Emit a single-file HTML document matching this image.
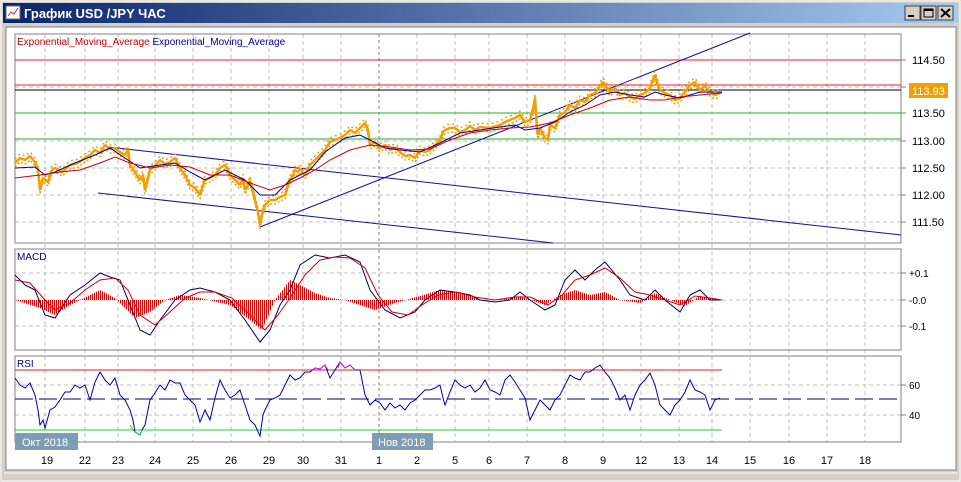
<!DOCTYPE html>
<html><head><meta charset="utf-8"><style>
html,body{margin:0;padding:0;width:961px;height:482px;overflow:hidden;background:#d4d0c8;font-family:"Liberation Sans",sans-serif}
</style></head><body>
<svg width="961" height="482" xmlns="http://www.w3.org/2000/svg" style="position:absolute;left:0;top:0" font-family="Liberation Sans, DejaVu Sans, sans-serif">
<defs>
<linearGradient id="tb" x1="0" x2="1"><stop offset="0" stop-color="#0a246a"/><stop offset="1" stop-color="#a6caf0"/></linearGradient>
<pattern id="hb" width="2" height="4" patternUnits="userSpaceOnUse"><rect width="1" height="4" fill="#e00000"/></pattern>
<polyline id="pr" fill="none" stroke="#f0a000" stroke-linejoin="bevel" points="15,163 20,158 25,160 30,156 35,162 38,170 40,190 43,178 48,182 52,170 55,168 62,172 70,165 78,163 85,158 90,155 95,150 100,153 105,145 110,149 115,148 120,152 125,155 128,150 130,165 135,172 140,180 143,175 145,190 148,178 150,170 155,166 160,160 165,164 170,162 175,158 180,168 185,175 190,185 195,188 200,195 203,185 205,180 210,178 215,175 220,168 225,165 228,170 230,175 235,180 240,185 243,178 245,190 248,185 250,180 253,192 255,200 258,212 260,225 263,210 265,205 270,200 275,200 280,197 285,195 288,185 290,180 293,175 295,170 298,172 300,168 303,173 305,175 310,165 315,160 320,155 325,150 330,142 335,140 340,138 345,135 348,132 350,130 355,133 360,128 363,125 365,123 368,130 370,145 375,142 380,148 385,145 390,150 395,148 400,152 405,156 410,155 415,158 420,150 425,152 430,150 435,145 440,140 443,132 445,130 450,128 455,128 460,132 465,130 470,126 475,130 480,127 490,128 500,125 505,122 510,120 515,118 520,115 525,122 530,120 533,110 535,98 537,130 538,135 540,128 545,138 548,140 550,125 555,128 560,115 565,112 570,105 575,108 580,100 585,102 590,95 595,93 600,86 603,82 605,85 610,92 615,88 620,95 625,93 630,97 635,99 640,95 645,93 650,88 653,80 655,75 657,82 660,90 665,93 670,95 675,100 680,98 685,92 690,85 695,82 700,90 705,86 710,92 715,95 720,93"/>
</defs>
<rect x="0" y="0" width="961" height="482" fill="#d4d0c8"/>
<rect x="1" y="1" width="959" height="480" fill="none" stroke="#ffffff"/>
<rect x="3" y="3" width="955" height="20" fill="url(#tb)"/>
<rect x="6" y="6" width="14" height="13" fill="#fff" stroke="#666"/>
<path d="M8 16 L11 12 L14 14 L18 8" stroke="#c03030" fill="none"/>
<text x="24" y="18" fill="#fff" font-size="13" font-weight="bold">График USD /JPY  ЧАС</text>
<g stroke="#404040" fill="#d4d0c8"><rect x="905" y="6" width="15" height="14"/><rect x="921" y="6" width="15" height="14"/><rect x="938" y="6" width="15" height="14"/></g>
<rect x="908" y="15" width="6" height="2" fill="#000"/>
<rect x="924" y="9" width="9" height="8" fill="none" stroke="#000"/><rect x="924" y="9" width="9" height="2" fill="#000"/>
<path d="M941 9 L950 17 M950 9 L941 17" stroke="#000" stroke-width="2"/>
<rect x="6" y="27" width="950" height="443" fill="#fff" stroke="#808080"/>
<line x1="4" y1="473" x2="957" y2="473" stroke="#fff"/>

<g stroke="#c0c0c0" stroke-dasharray="4,3">
<path d="M45 34V442M85 34V442M118 34V442M155 34V442M193 34V442M231 34V442M269 34V442M303 34V442M341 34V442M417 34V442M455 34V442M489 34V442M527 34V442M565 34V442M603 34V442M641 34V442M679 34V442M712 34V442M750 34V442M789 34V442M827 34V442M865 34V442"/>
<path d="M15 60H901M15 87H901M15 113H901M15 141H901M15 168H901M15 195H901M15 222H901"/>
<path d="M15 273H901M15 300H901M15 326H901M15 385H901M15 415H901"/>
</g>
<path d="M379 34V442" stroke="#808080" stroke-dasharray="3,3"/>

<g fill="none" stroke="#808080"><rect x="15" y="34" width="886" height="209"/><rect x="15" y="249" width="886" height="101"/><rect x="15" y="356" width="886" height="86"/></g>

<text x="17" y="45" font-size="10" fill="#c00000">Exponential_Moving_Average <tspan fill="#000090">Exponential_Moving_Average</tspan></text>
<line x1="15" y1="60" x2="901" y2="60" stroke="#e02020"/>
<line x1="15" y1="85" x2="901" y2="85" stroke="#e02020"/>
<line x1="15" y1="90" x2="901" y2="90" stroke="#000"/>
<line x1="15" y1="113" x2="901" y2="113" stroke="#20b020"/>
<line x1="15" y1="139" x2="901" y2="139" stroke="#20b020"/>
<g stroke="#10109a" fill="none">
<line x1="108" y1="147" x2="901" y2="235"/>
<line x1="98" y1="193" x2="553" y2="243"/>
<line x1="260" y1="227" x2="750" y2="33"/>
</g>
<use href="#pr" transform="translate(0,4)" stroke-width="1.5" stroke-dasharray="2,2"/>
<use href="#pr" transform="translate(0,-4)" stroke-width="1.5" stroke-dasharray="2,3"/>
<use href="#pr" stroke-width="2.5"/>
<polyline fill="none" stroke="#0000a0" stroke-width="1" points="15,168 35,167 45,175 55,172 75,163 95,155 110,148 125,158 140,168 160,165 175,163 190,172 205,180 225,170 245,180 260,195 275,195 290,180 310,170 325,152 345,138 360,135 370,140 385,148 400,150 420,152 440,143 460,133 480,130 500,127 515,125 525,130 540,128 555,122 570,112 585,105 600,95 615,92 630,95 645,97 655,92 665,95 680,98 690,95 700,92 712,92 722,92"/>
<polyline fill="none" stroke="#d00000" stroke-width="1" points="15,178 40,175 60,172 80,170 100,163 115,157 130,163 150,168 170,165 190,167 210,175 230,175 250,183 270,190 285,185 300,178 315,170 330,160 350,150 370,145 390,147 410,150 430,149 450,140 470,133 490,130 510,128 530,127 550,123 570,115 590,108 610,100 630,97 650,100 665,100 680,97 700,95 722,93"/>
<g font-size="11" fill="#000">
<text x="912" y="64">114.50</text><text x="912" y="117">113.50</text><text x="912" y="145">113.00</text><text x="912" y="172">112.50</text><text x="912" y="199">112.00</text><text x="912" y="226">111.50</text>
</g>
<rect x="909" y="83" width="39" height="15" fill="#f0a000"/>
<text x="912" y="95" font-size="11" fill="#fff">113.93</text>
<g stroke="#808080"><path d="M901 60h5M901 87h5M901 113h5M901 141h5M901 168h5M901 195h5M901 222h5M901 273h5M901 300h5M901 326h5M901 385h5M901 415h5"/></g>

<text x="17" y="260" font-size="10" fill="#000080">MACD</text>
<polygon fill="url(#hb)" points="15,300 40,308 55,315 70,305 90,295 100,290 115,298 135,318 150,312 165,300 180,295 200,298 230,305 250,320 262,330 275,300 290,280 300,285 315,293 330,298 345,300 360,305 375,310 395,303 420,296 440,290 460,292 480,300 500,300 520,296 545,305 560,295 575,290 590,295 605,292 620,300 640,303 655,293 670,300 685,306 700,296 720,300"/>
<polyline fill="none" stroke="#000060" points="15,275 25,285 35,290 45,315 55,318 70,295 85,285 100,273 110,277 120,280 130,305 140,330 150,335 160,320 175,300 190,290 200,288 215,292 230,300 245,320 260,342 270,330 280,305 290,290 300,265 315,255 330,258 345,255 360,262 370,290 385,310 400,318 415,312 425,300 440,290 455,292 470,295 480,300 495,302 510,300 520,292 530,300 545,310 555,305 565,280 575,270 585,280 595,270 605,262 620,280 630,295 645,300 655,290 665,300 680,312 690,295 700,290 710,300 720,300"/>
<polyline fill="none" stroke="#d00000" points="15,280 30,283 45,300 55,310 70,303 85,290 100,280 115,278 128,290 140,315 155,325 170,312 185,298 200,292 215,292 232,298 250,315 265,330 278,315 290,298 305,275 320,260 335,257 350,258 365,268 378,295 392,312 408,315 422,305 438,295 455,292 475,297 495,300 515,297 530,297 548,305 562,295 575,280 590,275 605,268 620,278 635,292 650,295 665,300 680,305 695,296 710,298 722,300"/>
<g font-size="10" fill="#000"><text x="909" y="277">+0.1</text><text x="909" y="304">-0.0</text><text x="909" y="330">-0.1</text></g>

<text x="17" y="367" font-size="10" fill="#000080">RSI</text>
<line x1="15" y1="370" x2="722" y2="370" stroke="#e02020"/>
<line x1="15" y1="430" x2="722" y2="430" stroke="#20d020"/>
<line x1="15" y1="399" x2="901" y2="399" stroke="#000080" stroke-dasharray="18,6"/>
<polyline fill="none" stroke="#0000b0" points="15,378 20,385 25,388 30,383 35,395 38,410 40,425 43,420 45,428 50,410 55,407 60,400 65,392 70,392 75,385 80,388 85,385 90,400 95,382 100,372 105,380 110,385 115,378 120,395 125,400 130,410 133,420 135,432 140,435 142,430 145,425 150,400 155,393 160,385 165,390 170,380 175,383 180,383 185,395 190,400 195,405 200,422 205,410 210,420 215,398 220,380 225,390 230,398 235,395 240,390 245,405 250,420 255,425 260,436 263,415 265,410 270,400 275,398 280,395 285,385 290,375 295,380 300,378 305,372 310,372 315,368 320,369 325,365 330,378 335,370 340,362 345,368 350,365 355,370 360,370 365,395 370,405 375,400 380,403 385,410 390,403 395,408 400,405 405,410 410,403 415,400 420,395 425,390 430,390 435,388 440,385 443,398 445,405 450,392 455,380 460,385 465,388 470,385 475,392 480,388 485,380 490,390 495,392 500,395 505,380 510,375 515,382 520,390 525,398 530,420 535,410 540,400 545,405 550,410 555,400 560,395 565,385 570,375 575,378 580,380 585,372 590,372 595,368 600,365 605,372 610,378 615,388 620,400 625,395 630,410 635,395 640,385 645,380 650,373 655,385 660,405 665,410 670,415 675,405 680,400 685,392 690,380 695,390 700,392 705,395 710,410 715,400 720,398"/>
<polyline fill="none" stroke="#20d020" points="130,425 133,430 135,432 140,435 142,430"/>
<polyline fill="none" stroke="#e020e0" points="312,370 315,368 320,369 325,365 328,370"/>
<polyline fill="none" stroke="#e020e0" points="338,368 340,362 345,368 350,365 355,370"/>
<g font-size="10" fill="#000"><text x="909" y="389">60</text><text x="909" y="419">40</text></g>

<rect x="15" y="433" width="63" height="17" fill="#7f9cb5"/>
<text x="22" y="446" font-size="11" fill="#fff">Окт 2018</text>
<rect x="372" y="433" width="61" height="17" fill="#7f9cb5"/>
<text x="378" y="446" font-size="11" fill="#fff">Нов 2018</text>
<g font-size="11" fill="#000" text-anchor="middle">
<text x="47" y="464">19</text><text x="85" y="464">22</text><text x="118" y="464">23</text><text x="155" y="464">24</text><text x="193" y="464">25</text><text x="231" y="464">26</text><text x="269" y="464">29</text><text x="303" y="464">30</text><text x="341" y="464">31</text><text x="379" y="464">1</text><text x="417" y="464">2</text><text x="455" y="464">5</text><text x="489" y="464">6</text><text x="527" y="464">7</text><text x="565" y="464">8</text><text x="603" y="464">9</text><text x="641" y="464">12</text><text x="679" y="464">13</text><text x="712" y="464">14</text><text x="750" y="464">15</text><text x="789" y="464">16</text><text x="827" y="464">17</text><text x="865" y="464">18</text>
</g>
</svg>
</body></html>
